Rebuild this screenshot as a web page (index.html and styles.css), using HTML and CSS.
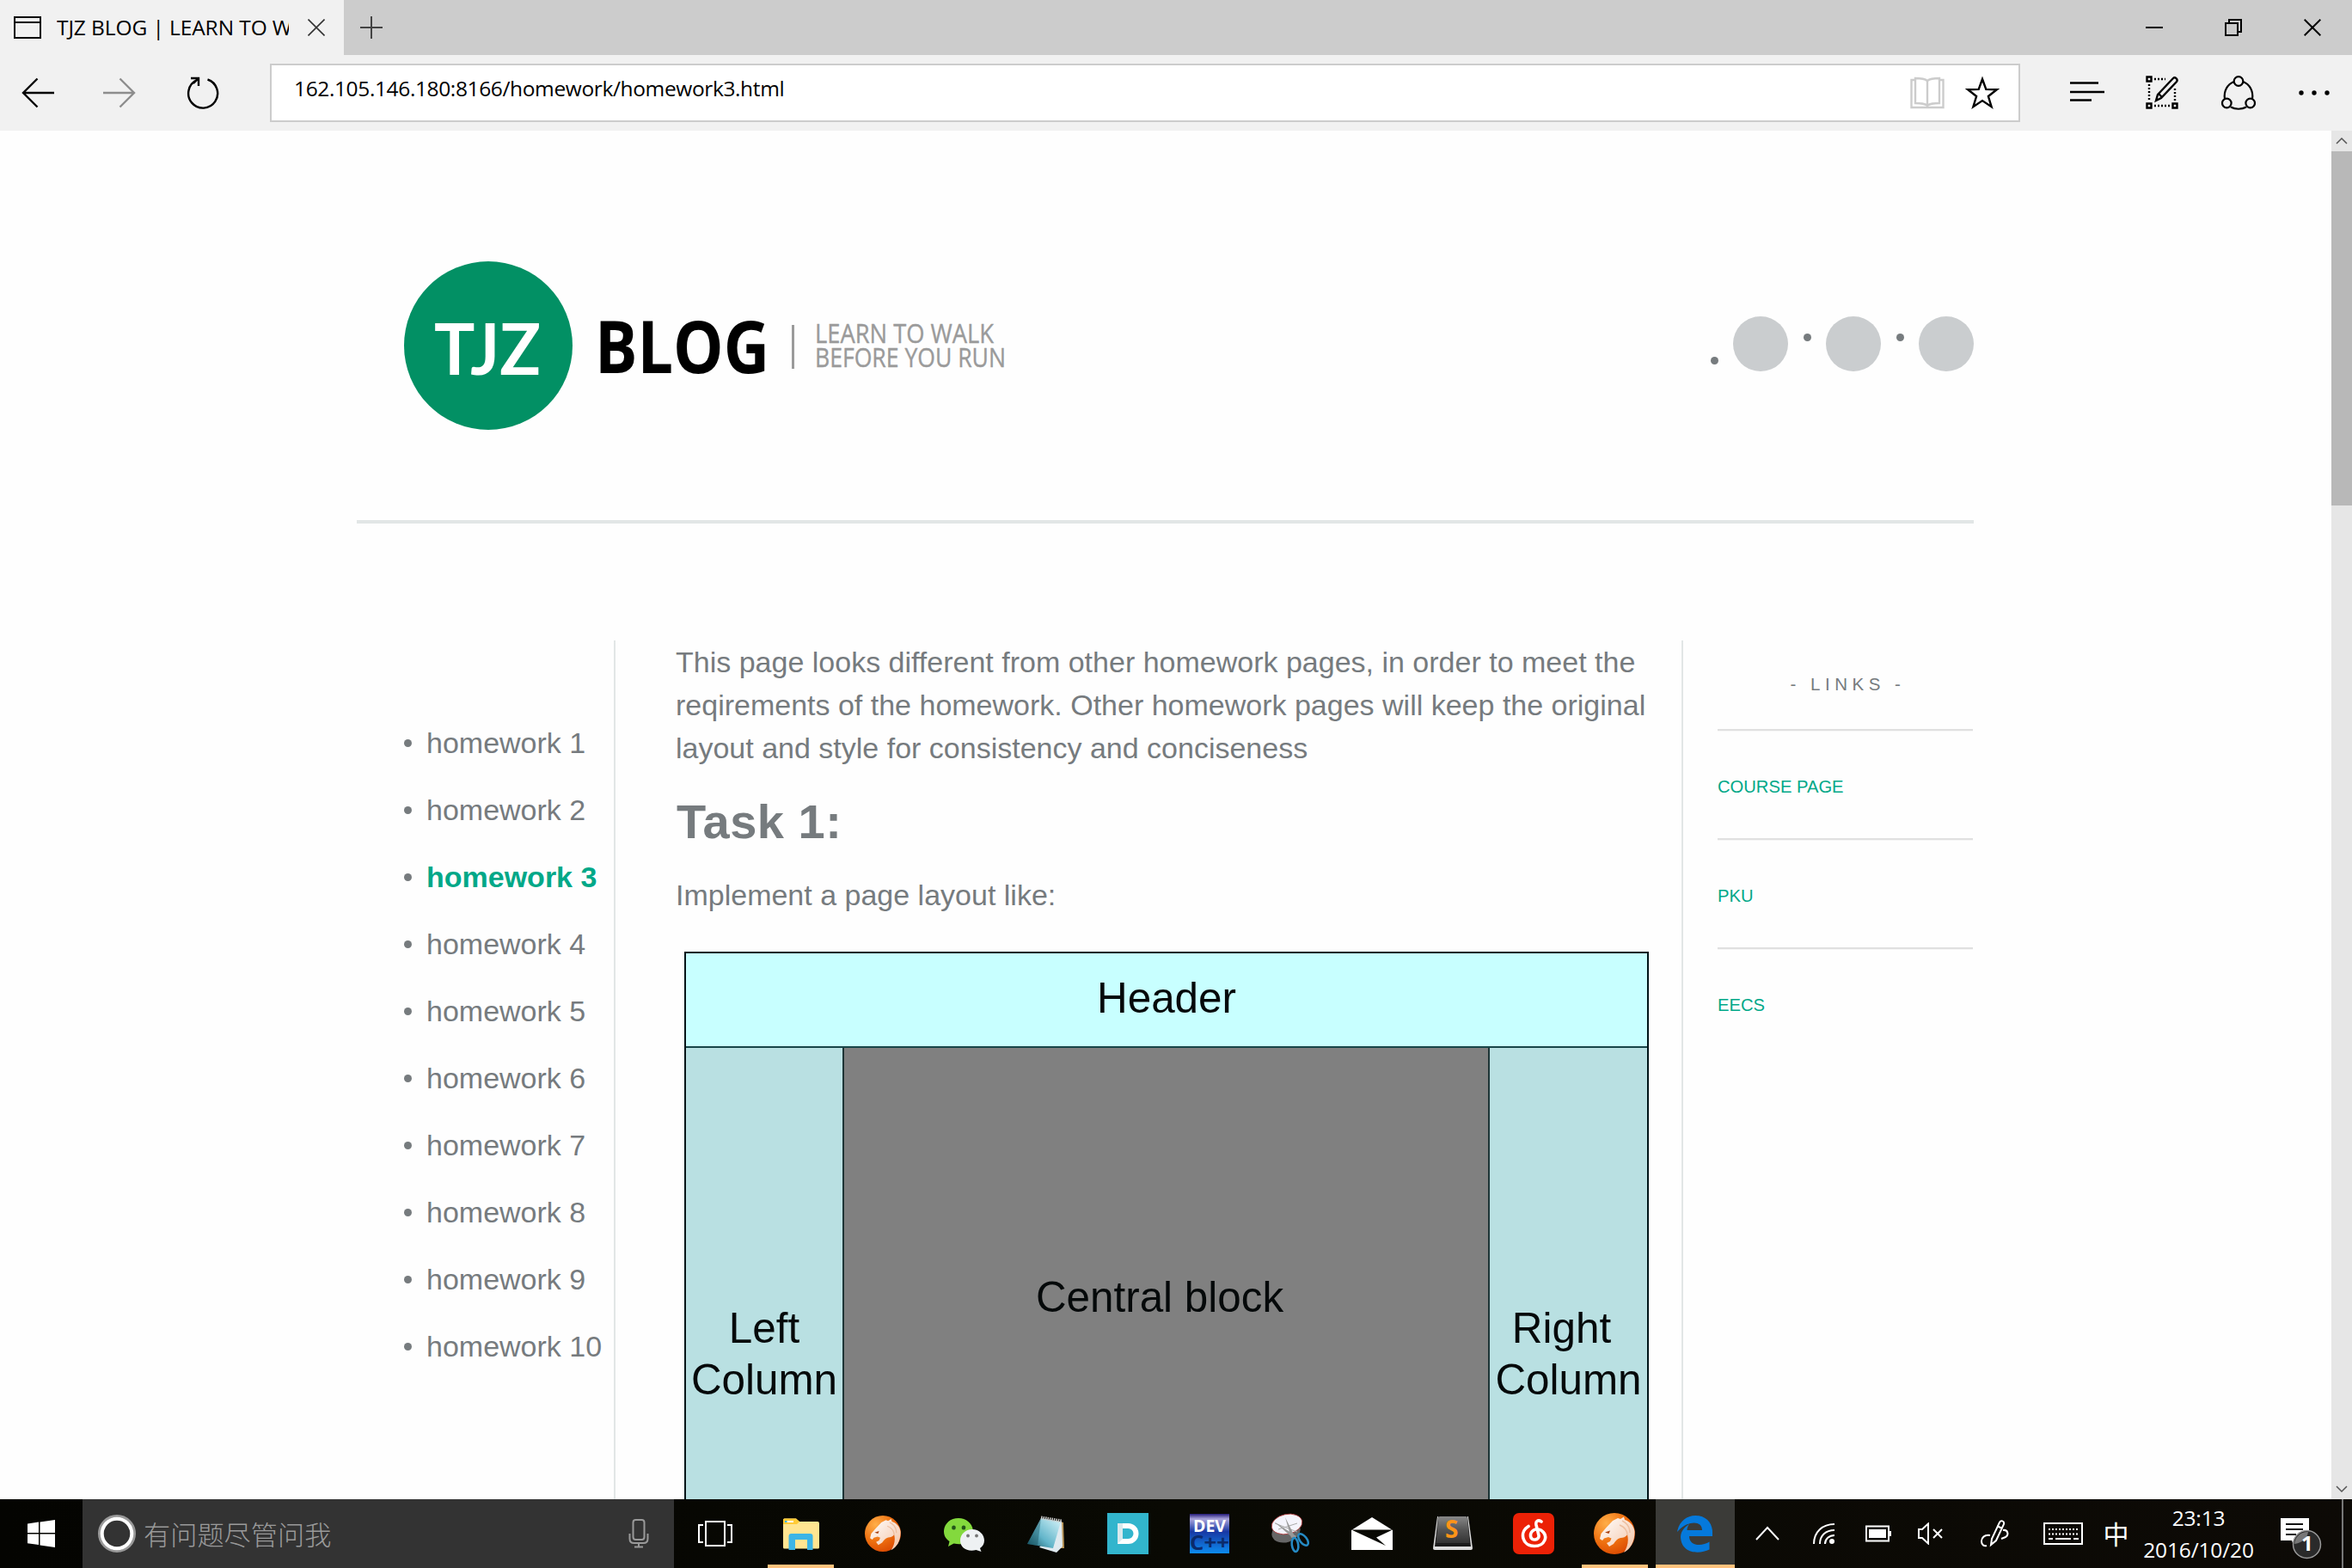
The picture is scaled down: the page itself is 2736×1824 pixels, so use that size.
FILE: index.html
```html
<!DOCTYPE html>
<html lang="en">
<head>
<meta charset="utf-8">
<title>TJZ BLOG | LEARN TO WALK BEFORE YOU RUN</title>
<link rel="stylesheet" href="styles.css">
</head>
<body>
<div class="screen">
  <div class="tabbar">
    <div class="tab">
      <svg width="32" height="26" viewBox="0 0 32 26" fill="none" stroke="#000" stroke-width="2"><path d="M1 1h30v24H1zM1 7h30"/></svg>
      <span class="tab-title">TJZ BLOG | LEARN TO W</span>
      <svg class="tab-close" width="20" height="20" viewBox="0 0 20 20" stroke="#333" stroke-width="1.6"><path d="M.5.5l19 19M19.5.5l-19 19"/></svg>
    </div>
    <svg class="tab-new" width="28" height="28" viewBox="0 0 28 28" stroke="#444" stroke-width="2"><path d="M1 14h26M14 1v26"/></svg>
    <div class="window-controls">
      <svg width="20" height="20" viewBox="0 0 20 20" stroke="#000" stroke-width="2"><path d="M0 10h20"/></svg>
      <svg width="20" height="20" viewBox="0 0 20 20" fill="none" stroke="#000" stroke-width="2"><path d="M1 5h14v14H1zM5 5V1h14v14h-4"/></svg>
      <svg width="20" height="20" viewBox="0 0 20 20" stroke="#000" stroke-width="2"><path d="M.7.7l18.600 18.600M19.300.7L.7 19.300"/></svg>
    </div>
  </div>

  <div class="toolbar">
    <div class="nav-button nav-back"><svg width="38" height="36" viewBox="0 0 38 36" fill="none" stroke="#000" stroke-width="2.400"><path d="M38 18H2M18.500 1.500L2 18l16.500 16.500"/></svg></div>
    <div class="nav-button nav-forward"><svg width="38" height="36" viewBox="0 0 38 36" fill="none" stroke="#8d8d8d" stroke-width="2.400"><path d="M0 18h36M19.500 1.500L36 18 19.500 34.500"/></svg></div>
    <div class="nav-button nav-refresh"><svg width="38" height="38" viewBox="0 0 38 38" fill="none" stroke="#000" stroke-width="2.400"><path d="M24.500 3.500A17 17 0 1 1 12 4.200M5 2h9v9M14 2L8 8"/></svg></div>
    <div class="address">
      <span class="url">162.105.146.180:8166/homework/homework3.html</span>
      <svg class="book" width="40" height="38" viewBox="0 0 40 38" fill="none" stroke="#ccc" stroke-width="2.400"><path d="M6 4H1.500v32h37V4H34M20 5c-3-2.500-8-3-14-3v29c6 0 11 0 14 3 3-3 8-3 14-3V2c-6 0-11 .5-14 3v29"/></svg>
      <svg width="40" height="40" viewBox="0 0 40 40" fill="none" stroke="#000" stroke-width="2.400"><path d="M20 4l4.300 11.900 12.500.3-9.900 7.800 3.700 12.200L20 29.100 9.400 36.200l3.700-12.200-9.900-7.800 12.500-.3z"/></svg>
    </div>
    <div class="tools">
      <svg width="40" height="40" viewBox="0 0 40 40" stroke="#000" stroke-width="2.400"><path d="M0 8.500h33M0 19h40M0 28.500h25"/></svg>
      <svg width="40" height="40" viewBox="0 0 40 40" fill="none" stroke="#000" stroke-width="2.400"><path d="M1.500 1.500h5v5h-5zM1.500 32.500h5v5h-5zM31.500 32.500h5v5h-5z"/><path stroke-dasharray="2 2" d="M10 4h13M4 10v20M10 35h20M34 15v16"/><path d="M12 29l2-7L32 3c2-2 6 1 4 4L18 26zM15 21l4 4"/></svg>
      <svg width="40" height="40" viewBox="0 0 40 40" fill="none" stroke="#000" stroke-width="2.200"><circle cx="20" cy="6.500" r="5.300"/><circle cx="6.300" cy="32" r="5.300"/><circle cx="33.700" cy="32" r="5.300"/><path d="M14.800 7C7 10 2.500 18 4 27M25.200 7C33 10 37.500 18 36 27M11 36.500c5 3 13 3 18 0"/></svg>
      <svg width="40" height="40" viewBox="0 0 40 40"><circle cx="5" cy="20" r="2.700"/><circle cx="20" cy="20" r="2.700"/><circle cx="35" cy="20" r="2.700"/></svg>
    </div>
  </div>

  <div class="viewport">
    <div class="page">
      <header class="masthead">
        <svg class="logo" width="710" height="196" viewBox="0 0 710 196">
          <circle cx="98" cy="98" r="98" fill="#029064"/>
          <text class="logo-tjz" x="35" y="132" textLength="124" lengthAdjust="spacingAndGlyphs">TJZ</text>
          <text class="logo-blog" x="222" y="130" textLength="203" lengthAdjust="spacingAndGlyphs">BLOG</text>
          <path d="M452.500 74v51" stroke="#9a9a9a" stroke-width="3"/>
          <text class="logo-tag" x="478" y="95" textLength="208" lengthAdjust="spacingAndGlyphs">LEARN TO WALK</text>
          <text class="logo-tag" x="478" y="123" textLength="222" lengthAdjust="spacingAndGlyphs">BEFORE YOU RUN</text>
        </svg>
        <ul class="social">
          <li class="low"><i></i><b></b></li>
          <li><i></i><b></b></li>
          <li><i></i><b></b></li>
        </ul>
      </header>
      <div class="columns">
        <nav class="homework">
          <ul>
            <li>homework 1</li>
            <li>homework 2</li>
            <li><span class="current">homework 3</span></li>
            <li>homework 4</li>
            <li>homework 5</li>
            <li>homework 6</li>
            <li>homework 7</li>
            <li>homework 8</li>
            <li>homework 9</li>
            <li>homework 10</li>
          </ul>
        </nav>
        <main class="content">
          <p>This page looks different from other homework pages, in order to meet the<br>reqirements of the homework. Other homework pages will keep the original<br>layout and style for consistency and conciseness</p>
          <h1>Task 1:</h1>
          <p>Implement a page layout like:</p>
          <div class="diagram">
            <div class="d-header">Header</div>
            <div class="d-row">
              <div class="d-side d-left">Left<br>Column</div>
              <div class="d-central">Central block</div>
              <div class="d-side"><span class="d-word">Right</span>Column</div>
            </div>
          </div>
        </main>
        <aside class="links">
          <h2>- LINKS -</h2>
          <a>COURSE PAGE</a>
          <a>PKU</a>
          <a>EECS</a>
        </aside>
      </div>
    </div>
    <div class="scrollbar">
      <svg width="24" height="24" viewBox="0 0 24 24" fill="none" stroke="#555" stroke-width="1.500"><path d="M6 15l6-6 6 6"/></svg>
      <div class="thumb"></div>
      <svg class="down" width="24" height="24" viewBox="0 0 24 24" fill="none" stroke="#555" stroke-width="1.500"><path d="M6 9l6 6 6-6"/></svg>
    </div>
  </div>

  <div class="taskbar">
    <div class="start"><svg width="32" height="32" viewBox="0 0 32 32" fill="#fff"><path d="M0 4.500L13 2.600V15H0zM14.500 2.400L32 0v15H14.500zM0 16.500h13V29L0 27.200zM14.500 16.500H32V32l-17.500-2.600z"/></svg></div>
    <div class="search">
      <svg width="44" height="44" viewBox="0 0 44 44" fill="none"><circle cx="22" cy="22" r="20.500" stroke="#999" stroke-width="3"/><circle cx="22" cy="22" r="17.300" stroke="#fff" stroke-width="4"/></svg>
      <span class="search-text">有问题尽管问我</span>
      <svg class="mic" width="24" height="34" viewBox="0 0 24 34" fill="none" stroke="#999" stroke-width="2"><rect x="5.500" y="1" width="13" height="23" rx="3"/><path d="M1.500 17v6c0 3 2 5 5 5h11c3 0 5-2 5-5v-6M12 28v4M7 32.500h10"/></svg>
    </div>
    <div class="taskview"><svg width="40" height="30" viewBox="0 0 40 30" fill="none" stroke="#fff" stroke-width="2"><path d="M9 1h22v28H9zM6 5H1v20h5M34 5h5v20h-5"/></svg></div>
    <div class="apps">
      <div class="app running"><svg width="48" height="48" viewBox="0 0 48 48"><path d="M3 8q0-1.500 1.500-1.500H18l4 3.500h21q2 0 2 2v28q0 1.500-1.500 1.500h-39Q3 41.500 3 40z" fill="#ffe591"/><path d="M3 8q0-1.500 1.500-1.500H18l4 3.500-3 3H3z" fill="#ffcb38"/><path d="M7 9h8v2H7z" fill="#fff"/><path d="M5 9h2.500v2H5z" fill="#3cb5e6"/><path d="M9.500 43V27q0-3 3-3h22q3 0 3 3v16H31V31H17v12z" fill="#3cb5e6"/></svg></div>
      <div class="app"><svg width="48" height="48" viewBox="0 0 48 48"><use href="#cheetah" transform="translate(3 3) scale(.875)"/></svg></div>
      <div class="app"><svg width="48" height="48" viewBox="0 0 48 48"><path d="M17 6C7 6 0 13 0 21.500c0 5 2.500 9 6.500 11.500l-1.500 6 6.500-3.500c16 3.500 24-5.500 22.500-15C33 12 26 6 17 6z" fill="#83d93d"/><ellipse cx="11.500" cy="17" rx="2.300" ry="2.600" fill="#24551a"/><ellipse cx="23" cy="17" rx="2.300" ry="2.600" fill="#24551a"/><path d="M33 19c8 0 14 6 14 13 0 4-2 7-5 9l1.500 4-6-2C27 45.500 19 40.500 19 32c0-7 6-13 14-13z" fill="#eef1f3"/><circle cx="28" cy="26.500" r="1.900" fill="#777"/><circle cx="38" cy="26.500" r="1.900" fill="#777"/></svg></div>
      <div class="app"><svg width="48" height="48" viewBox="0 0 48 48"><defs><linearGradient id="note" x1="0" y1="1" x2="1" y2="0"><stop offset="0" stop-color="#12505f"/><stop offset=".4" stop-color="#62b5ca"/><stop offset="1" stop-color="#d8f5fa"/></linearGradient></defs><path d="M36 9l8 2 1 30h-7z" fill="#b99558"/><path d="M42 9l1 30-7 7-20-6z" fill="#dfeaf0"/><path d="M18 6l23 4-9 31L2 36z" fill="url(#note)"/><path d="M18 6l-4 32-12-2z" fill="#134c57" opacity=".4"/><path d="M18 5.500l24 4" stroke="#ccc" stroke-width="4" stroke-dasharray="1.500 1"/></svg></div>
      <div class="app"><svg width="48" height="48" viewBox="0 0 48 48"><path d="M0 0h48v48H0z" fill="#32b5cd"/><path d="M15 15h9.500a9 9 0 0 1 0 18H15z" fill="none" stroke="#fff" stroke-width="6"/><path d="M12 12h6v18l-6 6z" fill="#d9e9ed"/></svg></div>
      <div class="app"><svg width="48" height="48" viewBox="0 0 48 48"><defs><linearGradient id="dev" x1="0" y1="0" x2="0" y2="1"><stop offset="0" stop-color="#241a78"/><stop offset=".13" stop-color="#aaa5dc"/><stop offset=".45" stop-color="#1838a4"/><stop offset="1" stop-color="#0c8cf0"/></linearGradient></defs><path d="M1 1h46v46H1z" fill="url(#dev)"/><text class="dev-a" x="5" y="22" textLength="38" lengthAdjust="spacingAndGlyphs">DEV</text><text class="dev-b" x="1" y="43" textLength="46" lengthAdjust="spacingAndGlyphs">C++</text></svg></div>
      <div class="app"><svg width="48" height="48" viewBox="0 0 48 48"><ellipse cx="18" cy="22" rx="17" ry="12" transform="rotate(-18 18 22)" fill="#666"/><ellipse cx="19" cy="13" rx="18" ry="11.500" transform="rotate(-12 19 13)" fill="#f4f4fc" stroke="#a33" stroke-width=".8"/><path d="M5 12l26 10M9 19l22-7" stroke="#aaa" stroke-width="1"/><path d="M4 10l23 20 3-3zM17 5l7 24 4-2z" fill="#999"/><g fill="none" stroke="#258ac4" stroke-width="2.600"><ellipse cx="38" cy="31" rx="4" ry="8" transform="rotate(-38 38 31)"/><ellipse cx="28.500" cy="37" rx="3.700" ry="8" transform="rotate(-8 28.500 37)"/></g></svg></div>
      <div class="app narrow"><svg width="48" height="48" viewBox="0 0 48 48"><path d="M0 20L24 5l24 15v23H0z" fill="#fff"/><path d="M0 19.500h48L29 28.500l11 9.500z" fill="#090903"/></svg></div>
      <div class="app narrow"><svg width="48" height="48" viewBox="0 0 48 48"><defs><linearGradient id="sub" x1="0" y1="0" x2="0" y2="1"><stop offset="0" stop-color="#888"/><stop offset=".5" stop-color="#555"/><stop offset="1" stop-color="#333"/></linearGradient></defs><path d="M6 4h36l5 37q0 2-2 2H3q-2 0-2-2z" fill="#ddd"/><path d="M7 4h34l4 35H3z" fill="#1b1b1b"/><path d="M7 6q0-2 2-2h30q2 0 2 2l2.500 29H4.500z" fill="url(#sub)"/><text class="sublime" x="15" y="29">S</text></svg></div>
      <div class="app narrow"><svg width="48" height="48" viewBox="0 0 48 48"><rect width="48" height="48" rx="7" fill="#ec2106"/><path d="M33 10c-4-2.500-7-.5-6 4l3 12c1 6-9 7-9.500 1-.5-7 7-10 12-7 10 7 4 18.500-7.500 18.500-14.500 0-18-16.500-7-23" fill="none" stroke="#fff" stroke-width="3.600" stroke-linecap="round"/></svg></div>
      <div class="app narrow running"><svg width="48" height="48" viewBox="0 0 48 48"><defs><radialGradient id="orange" cx=".3" cy=".25" r=".85"><stop offset="0" stop-color="#ffae48"/><stop offset=".55" stop-color="#ee7010"/><stop offset="1" stop-color="#d94600"/></radialGradient><linearGradient id="mane" x1="0" y1="0" x2="1" y2="1"><stop offset="0" stop-color="#fff"/><stop offset="1" stop-color="#f3c3a4"/></linearGradient></defs><g id="cheetah"><circle cx="24" cy="24" r="24" fill="url(#orange)"/><path d="M7 30l1.500-6 6-7L22 9l6-3 3 1 4-2.500 1 3.500c7 2 11 8 11.500 14 0 12-5 20-12.500 24 4-6 6-13 4-21-2 3-5 4-8 4-4 1-6 4-8 7l-5 3-3-4 4-2 1.500-3.500L17 28l-5 1.500-2 2.500z" fill="url(#mane)"/><path d="M13 22.500l6-2-1.500 3.500z" fill="#a9410f"/><path d="M30 14c5 2 9 6 9 12M33 9c6 3 9 8 9 14" fill="none" stroke="#eebfa0" stroke-width="1.500"/></g></svg></div>
      <div class="app narrow running active"><svg width="48" height="48" viewBox="0 0 48 48"><path fill="#0579db" d="M3 22C5 10 14 3 24 3c13 0 20 9 20 19v5H17c0 12 15 12 23.500 6.500v9C29 48 8 48 7 28c0-7 5-12 10-15-2 3-2.500 5-2.500 7H32C32 8 14 9 3 22z"/></svg></div>
    </div>
    <div class="tray">
      <svg width="28" height="18" viewBox="0 0 28 18" fill="none" stroke="#fff" stroke-width="2"><path d="M1 16L14 2l13 14"/></svg>
      <svg width="26" height="26" viewBox="0 0 26 26" fill="none" stroke="#fff" stroke-width="2"><path d="M1 25C1 11 11 2 25 2M8 25C8 15 15 9 25 9M14 25c0-6 5-10 11-10"/><circle cx="22" cy="22" r="3" fill="#fff" stroke="none"/></svg>
      <svg width="30" height="20" viewBox="0 0 30 20" fill="none" stroke="#fff" stroke-width="2"><path d="M1 1.500h26v17H1z"/><path d="M4 5h20v10H4zM28 7h2v6h-2z" fill="#fff" stroke="none"/></svg>
      <svg width="30" height="26" viewBox="0 0 30 26" fill="none" stroke="#fff" stroke-width="2"><path d="M1 8h4l7-6.500v23L5 18H1zM18 8l10 10M28 8L18 18"/></svg>
      <svg width="34" height="34" viewBox="0 0 34 34" fill="none" stroke="#fff" stroke-width="2"><path d="M13 30l1-7 9-19c1-3 6-2 5 2l-9 19zM20 8l6 3M12 19c-7-1-10 3-10 7s3 6 6 5M27 13c6-1 7 6 3 8l-5 2"/></svg>
      <svg width="46" height="26" viewBox="0 0 46 26" fill="none" stroke="#fff" stroke-width="2"><path d="M1 1h44v24H1z"/><path d="M6 8h35M6 13.500h35" stroke-dasharray="2 2"/><path d="M6 19h5M14 19h18M35 19h6"/></svg>
      <span class="ime">中</span>
      <div class="clock"><span>23:13</span><span>2016/10/20</span></div>
      <svg class="notify" width="50" height="50" viewBox="0 0 50 50"><path d="M1 1h33v26H20l-4 6-2-6H1z" fill="#fff"/><path d="M7 8h20M7 14h20M7 20h12" stroke="#111" stroke-width="2"/><circle cx="31.500" cy="31.500" r="16" fill="#2a2a2a" stroke="#999" stroke-width="1.500"/><path d="M17 31a15 15 0 0 1 16-14c-1 8-8 13-16 14z" fill="#777"/><text class="badge" x="25" y="39">1</text></svg>
    </div>
    <div class="show-desktop"></div>
  </div>
</div>
</body>
</html>
```
FILE: styles.css
```css
* { box-sizing: border-box; }
body { margin: 0; background: #fefefe; font-family: "Liberation Sans", Arial, sans-serif; }
ul, p, h1, h2 { margin: 0; padding: 0; list-style: none; }
svg { display: block; flex: none; }

.screen { width: 2736px; height: 1824px; display: flex; flex-direction: column; overflow: hidden; }

/* Browser chrome */
.tabbar { height: 64px; background: #ccc; display: flex; align-items: center; flex: none; }
.tab { width: 400px; height: 64px; background: #f1f1f1; display: flex; align-items: center; padding: 0 22px 0 16px; }
.tab-title { width: 270px; margin-left: 18px; padding-bottom: 1px; overflow: hidden; white-space: nowrap; font: 24.500px/36px "Open Sans", "Noto Sans", sans-serif; letter-spacing: -0.1px; color: #000; }
.tab-close { margin-left: auto; }
.tab-new { margin-left: 18px; }
.window-controls { margin-left: auto; display: flex; }
.window-controls svg { margin: 0 36px; }

.toolbar { height: 88px; background: #f1f1f1; display: flex; align-items: center; flex: none; }
.nav-button { display: flex; justify-content: center; }
.nav-back { width: 87px; }
.nav-forward { width: 104px; }
.nav-refresh { width: 90px; }
.address { width: 2036px; height: 68px; margin-left: 33px; border: 2px solid #ccc; background: #fff; display: flex; align-items: center; padding: 0 22px 0 26px; }
.url { flex: 1; padding-bottom: 10px; font: 24.500px/34px "Open Sans", "Noto Sans", sans-serif; letter-spacing: -0.37px; color: #000; white-space: nowrap; }
.book { margin-right: 24px; }
.tools { margin-left: 34px; display: flex; }
.tools svg { margin: 0 24px; }

/* Page viewport */
.viewport { height: 1592px; display: flex; overflow: hidden; flex: none; }
.page { flex: 1; padding-left: 415px; color: #767b7e; }
.masthead { width: 1881px; height: 457px; border-bottom: 4px solid #e2e6e6; padding: 152px 0 0 55px; display: flex; justify-content: space-between; align-items: flex-start; }
.logo-tjz { font: 700 83px Lato, sans-serif; fill: #fff; }
.logo-blog { font: 700 84px "Open Sans", sans-serif; fill: #000; }
.logo-tag { font: 400 31px "Open Sans", sans-serif; fill: #9a9a9a; stroke: #9a9a9a; stroke-width: .4px; }
.social { display: flex; padding-top: 64px; }
.social li { display: flex; align-items: flex-start; margin-left: 18px; }
.social i { width: 9px; height: 9px; border-radius: 50%; background: #767b7e; margin: 20px 17px 0 0; }
.social .low i { margin-top: 47px; }
.social b { width: 64px; height: 64px; border-radius: 50%; background: #cacdcf; }

.columns { width: 1881px; height: 1400px; margin-top: 136px; display: flex; font-size: 34px; line-height: 50px; }
.homework { width: 301px; border-right: 2px solid #e2e6e6; padding: 94px 0 0 55px; }
.homework li { display: flex; align-items: center; height: 50px; margin-bottom: 28px; white-space: nowrap; }
.homework li::before { content: ""; width: 9px; height: 9px; border-radius: 50%; background: #767b7e; margin-right: 17px; flex: none; }
.current { color: #00a888; font-weight: 700; }

.content { width: 1240px; padding-left: 70px; white-space: nowrap; }
.content h1 { margin: 21px 0 20px 1px; font-size: 56px; line-height: 80px; font-weight: 700; letter-spacing: .5px; }
.diagram { width: 1122px; height: 900px; margin: 41px 0 0 10px; border: 2px solid #001418; display: flex; flex-direction: column; color: #05090a; font-size: 49.400px; line-height: 60px; text-align: center; }
.d-header { height: 110px; background: #c8ffff; border-bottom: 2px solid #174548; padding-top: 22px; }
.d-row { flex: 1; display: flex; }
.d-side { width: 183px; background: #b9e0e2; padding-top: 296px; }
.d-left { width: 182px; }
.d-word { display: block; padding-right: 16px; }
.d-central { flex: 1; background: #808080; border: solid #1d3436; border-width: 0 2px; padding: 260px 15px 0 0; }

.links { width: 340px; border-left: 2px solid #e2e6e6; padding: 34px 1px 0 40px; display: flex; flex-direction: column; font-size: 20.200px; }
.links h2 { height: 69px; font-size: 20.500px; line-height: 34px; font-weight: 400; letter-spacing: 5.500px; text-align: center; padding: 0 0 0 6px; }
.links a { height: 127px; border-top: 2px solid #e0e0e0; box-shadow: inset 0 1px #f6f6f6; color: #00a888; padding-top: 40px; }

.scrollbar { width: 24px; background: #e6e6e6; display: flex; flex-direction: column; }
.thumb { height: 412px; background: #b8b8b8; }
.down { margin-top: auto; }

/* Taskbar */
.taskbar { height: 80px; background: linear-gradient(90deg, #040401, #090903 50%, #0d0a06); display: flex; align-items: center; flex: none; }
.start { width: 96px; display: flex; justify-content: center; }
.search { width: 688px; height: 80px; background: #333; display: flex; align-items: center; padding: 0 29px 0 18px; }
.search-text { margin-left: 9px; flex: 1; color: #9a9a9a; font: 300 31.200px/46px "Noto Sans CJK SC", sans-serif; }
.taskview { width: 100px; display: flex; padding-left: 28px; }
.apps { display: flex; }
.app { width: 95px; height: 80px; display: flex; align-items: center; justify-content: center; }
.narrow { width: 94px; }
.running { background: linear-gradient(#ffc27c, #ffc27c) center bottom / 77px 4px no-repeat; }
.active { background: linear-gradient(#ffc27c, #ffc27c) center bottom / 92px 4px no-repeat, linear-gradient(#3b3b38, #3b3b38) center / 92px 80px no-repeat; }
.dev-a { font: 700 20px "Open Sans", sans-serif; fill: #fff; }
.dev-b { font: 700 23px "Open Sans", sans-serif; fill: #0b2a6b; }
.sublime { font: 700 28px "Open Sans", sans-serif; fill: #ff9417; }

.tray { display: grid; grid-template-columns: 74px 58px 68px 54px 94px 66px 57px 135px 99px; align-items: center; justify-items: center; color: #fff; }
.ime { padding-bottom: 2px; font: 400 30px/40px "Noto Sans CJK SC", sans-serif; }
.clock { display: flex; flex-direction: column; align-items: center; font: 24.500px/37px "Open Sans", "Noto Sans", sans-serif; letter-spacing: -0.15px; }
.notify { margin: 12px 0 0 5px; }
.badge { font: 700 24px "Open Sans", sans-serif; fill: #fff; }
.show-desktop { width: 2px; height: 80px; background: #777; }
```
